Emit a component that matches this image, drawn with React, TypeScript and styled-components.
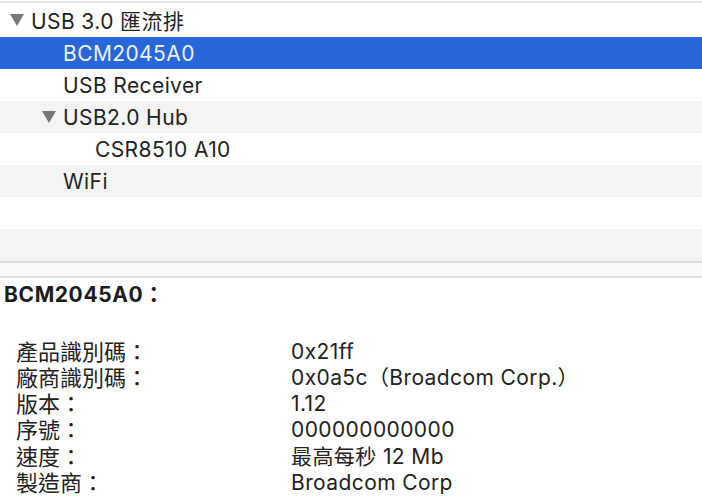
import React from "react";
import styled, { createGlobalStyle } from "styled-components";

const Global = createGlobalStyle`
  html, body { margin: 0; padding: 0; background: #ffffff; }
  body {
    font-family: Inter, "Noto Sans CJK TC", sans-serif;
    color: #222222;
    -webkit-font-smoothing: antialiased;
  }
`;

const Page = styled.div`
  width: 702px;
  height: 496px;
  overflow: hidden;
  display: flex;
  flex-direction: column;
  background: #ffffff;
`;

const Outline = styled.div`
  margin-top: 1px;
  border-top: 2px solid #e4e4e4;
  display: flex;
  flex-direction: column;
`;

const Row = styled.div<{ $level: number; $stripe: boolean; $selected: boolean; $first?: boolean }>`
  height: ${(p) => (p.$first ? 34 : 32)}px;
  display: flex;
  align-items: center;
  box-sizing: border-box;
  padding-left: ${(p) => 10 + p.$level * 32}px;
  background: ${(p) => (p.$selected ? "#2767d7" : p.$stripe ? "#f4f4f4" : "#ffffff")};
  color: ${(p) => (p.$selected ? "#eef2fb" : "#232323")};
  font-size: 21px;
  letter-spacing: 0.4px;
  white-space: nowrap;
`;

const Toggle = styled.span`
  width: 21px;
  display: inline-flex;
  align-items: center;
  flex: none;
`;

const Splitter = styled.div`
  height: 15px;
  background: #fafafa;
  border-top: 2px solid #dedede;
  border-bottom: 2px solid #e2e2e2;
`;

const Detail = styled.div`
  padding: 4px 0 0 4px;
  display: flex;
  flex-direction: column;
`;

const Heading = styled.div`
  font-weight: bold;
  font-size: 21px;
  letter-spacing: 0.6px;
  line-height: 26px;
  color: #1c1c1c;
  margin-bottom: 31px;
`;

const Props = styled.div`
  display: grid;
  grid-template-columns: 275px 1fr;
  padding-left: 12px;
  font-size: 21px;
  line-height: 26.2px;
  color: #222222;
`;

const Label = styled.div`
  white-space: nowrap;
  font-size: 22px;
`;

const Value = styled.div`
  white-space: nowrap;
  letter-spacing: 0.4px;
`;

const Triangle = () => (
  <svg width="14" height="12" viewBox="0 0 14 12">
    <polygon points="0,0 14,0 7,12" fill="#777777" />
  </svg>
);

type Item = { label: string; level: number; open?: boolean; selected?: boolean };

const items: Item[] = [
  { label: "USB 3.0 匯流排", level: 0, open: true },
  { label: "BCM2045A0", level: 1, selected: true },
  { label: "USB Receiver", level: 1 },
  { label: "USB2.0 Hub", level: 1, open: true },
  { label: "CSR8510 A10", level: 2 },
  { label: "WiFi", level: 1 },
  { label: "", level: 0 },
  { label: "", level: 0 },
];

const details: [string, string][] = [
  ["產品識別碼：", "0x21ff"],
  ["廠商識別碼：", "0x0a5c（Broadcom Corp.）"],
  ["版本：", "1.12"],
  ["序號：", "000000000000"],
  ["速度：", "最高每秒 12 Mb"],
  ["製造商：", "Broadcom Corp"],
];

export default function App() {
  return (
    <>
      <Global />
      <Page>
        <Outline>
          {items.map((it, i) => (
            <Row
              key={i}
              $level={it.level}
              $stripe={i % 2 === 1}
              $selected={!!it.selected}
              $first={i === 0}
            >
              <Toggle>{it.open ? <Triangle /> : null}</Toggle>
              {it.label}
            </Row>
          ))}
        </Outline>
        <Splitter />
        <Detail>
          <Heading>BCM2045A0：</Heading>
          <Props>
            {details.map(([k, v]) => (
              <React.Fragment key={k}>
                <Label>{k}</Label>
                <Value>{v}</Value>
              </React.Fragment>
            ))}
          </Props>
        </Detail>
      </Page>
    </>
  );
}
